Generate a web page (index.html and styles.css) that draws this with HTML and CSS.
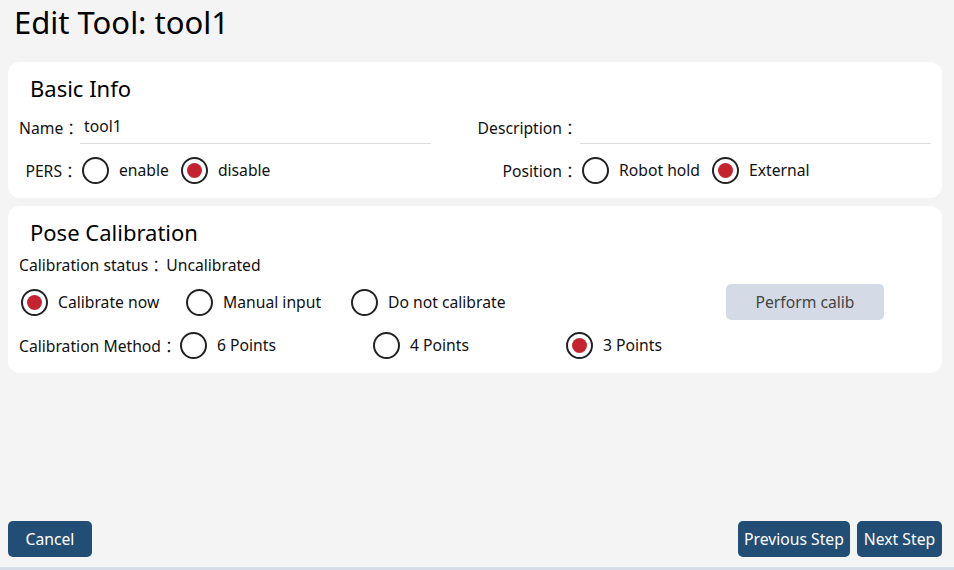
FILE: index.html
```html
<!DOCTYPE html>
<html>
<head>
  <title>Edit Tool</title>
  <link rel="stylesheet" href="styles.css">
</head>
<body>
  <div class="page">
    <h1 class="title">Edit Tool: tool1</h1>

    <section class="card basic">
      <h2>Basic Info</h2>
      <div class="grid">
        <div class="field">
          <span class="label label-left">Name<span class="colon">：</span></span>
          <div class="input">tool1</div>
        </div>
        <div class="field">
          <span class="label label-right">Description<span class="colon">：</span></span>
          <div class="input input-wide"></div>
        </div>
        <div class="field">
          <span class="label label-left">PERS<span class="colon">：</span></span>
          <label class="opt"><span class="radio"></span>enable</label>
          <label class="opt"><span class="radio checked"></span>disable</label>
        </div>
        <div class="field">
          <span class="label label-right">Position<span class="colon">：</span></span>
          <label class="opt"><span class="radio"></span>Robot hold</label>
          <label class="opt"><span class="radio checked"></span>External</label>
        </div>
      </div>
    </section>

    <section class="card pose">
      <h2>Pose Calibration</h2>
      <div class="status">Calibration status<span class="colon">：</span>Uncalibrated</div>
      <div class="calib-row">
        <label class="opt opt-calib"><span class="radio checked"></span>Calibrate now</label>
        <label class="opt opt-calib"><span class="radio"></span>Manual input</label>
        <label class="opt opt-calib"><span class="radio"></span>Do not calibrate</label>
        <button class="btn-light">Perform calib</button>
      </div>
      <div class="method-row">
        <span class="method-label">Calibration Method<span class="colon">：</span></span>
        <label class="opt opt-method"><span class="radio"></span>6 Points</label>
        <label class="opt opt-method"><span class="radio"></span>4 Points</label>
        <label class="opt opt-method"><span class="radio checked"></span>3 Points</label>
      </div>
    </section>

    <footer class="footer">
      <button class="btn btn-cancel">Cancel</button>
      <div class="footer-right">
        <button class="btn btn-prev">Previous Step</button>
        <button class="btn btn-next">Next Step</button>
      </div>
    </footer>
  </div>
  <div class="strip"></div>
</body>
</html>
```

FILE: styles.css
```css
body {
  margin: 0;
  background-color: #f4f4f4;
  font-family: "Noto Sans", "Noto Sans CJK SC", sans-serif;
  color: #111;
  font-size: 15.7px;
}

.page {
  height: 567px;
  padding: 0 12px 0 8px;
  display: flex;
  flex-direction: column;
  box-sizing: border-box;
}

.title {
  margin: 0 0 18px 6px;
  font-size: 31px;
  font-weight: normal;
  line-height: 44px;
  color: #000;
}

.card {
  background-color: #fff;
  border-radius: 12px;
  padding: 10px 11px 12px 11px;
}

.card h2 {
  margin: 0 0 6px 11px;
  font-size: 22px;
  font-weight: normal;
  line-height: 32px;
  color: #000;
}

.colon {
  display: inline-block;
  width: 18px;
  padding-left: 4px;
  box-sizing: border-box;
  text-align: left;
  overflow: visible;
}

.grid {
  display: grid;
  grid-template-columns: 456px 456px;
  row-gap: 10px;
}

.field {
  display: flex;
  align-items: center;
  height: 34px;
}

.grid .field:nth-child(n+3) {
  height: 32px;
}

.label {
  text-align: right;
  white-space: nowrap;
}

.label-left {
  width: 61px;
}

.label-right {
  width: 105px;
}

.input {
  width: 347px;
  height: 33px;
  line-height: 32px;
  padding-left: 4px;
  border-bottom: 1px solid #dddddd;
  box-sizing: content-box;
}

.input-wide {
  flex: 1;
}

.opt {
  display: flex;
  align-items: center;
  white-space: nowrap;
  margin-right: 10px;
}

.radio {
  width: 27px;
  height: 27px;
  box-sizing: border-box;
  border: 2px solid #222;
  border-radius: 50%;
  margin: 0 10px 0 2px;
  display: flex;
  align-items: center;
  justify-content: center;
}

.radio.checked::after {
  content: "";
  width: 15px;
  height: 15px;
  border-radius: 50%;
  background-color: #c4232f;
}

.pose {
  margin-top: 8px;
  padding-bottom: 14px;
}

.pose h2 {
  margin-bottom: 4px;
}

.status {
  height: 26px;
  line-height: 26px;
}

.calib-row {
  display: flex;
  align-items: center;
  height: 36px;
  margin-top: 6px;
}

.opt-calib {
  width: 165px;
  margin-right: 0;
}

.btn-light {
  margin-left: auto;
  margin-right: 47px;
  width: 158px;
  height: 36px;
  border: none;
  border-radius: 5px;
  background-color: #d4dbe6;
  color: #444;
  font-family: inherit;
  font-size: 15.7px;
}

.method-row {
  display: flex;
  align-items: center;
  height: 28px;
  margin-top: 11px;
}

.method-label {
  width: 159px;
  white-space: nowrap;
}

.opt-method {
  width: 193px;
  margin-right: 0;
}

.footer {
  margin-top: auto;
  padding-bottom: 10px;
  display: flex;
  justify-content: space-between;
  align-items: center;
}

.footer-right {
  display: flex;
  gap: 7px;
}

.btn {
  height: 36px;
  padding: 0;
  border: none;
  border-radius: 5px;
  background-color: #224e76;
  color: #fff;
  font-family: inherit;
  font-size: 15.7px;
  white-space: nowrap;
}

.btn-cancel {
  width: 84px;
}

.btn-prev {
  width: 112px;
}

.btn-next {
  width: 85px;
}

.strip {
  height: 3px;
  background-color: #d6dde8;
}
```
